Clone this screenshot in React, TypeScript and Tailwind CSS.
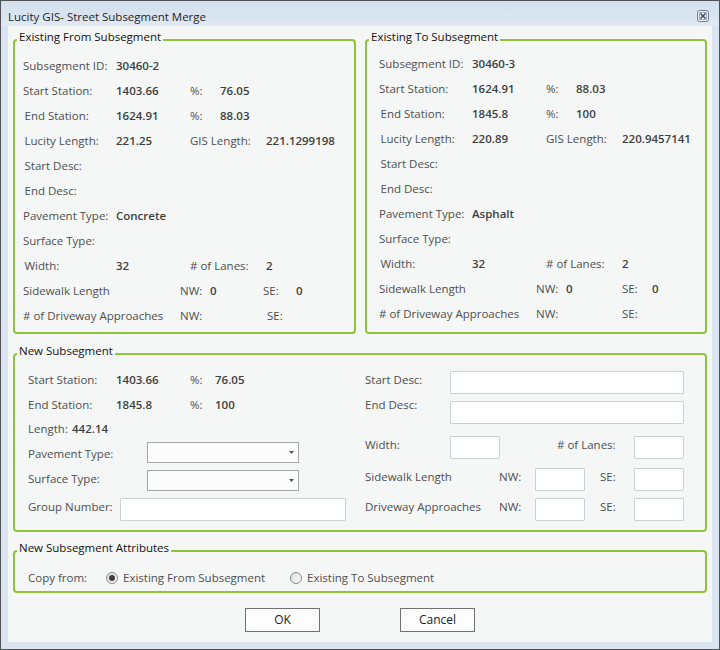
import React from "react";

const LBL = "text-[#4e4e4e]";
const VAL = "font-semibold text-[#3e3e3e]";

type C = { t: string; w?: string; v?: boolean; cls?: string };

function Row({ cells }: { cells: C[] }) {
  return (
    <div className="flex h-[25px] items-center whitespace-nowrap">
      {cells.map((c, i) => (
        <span key={i} className={`shrink-0 ${c.w ?? ""} ${c.v ? VAL : LBL} ${c.cls ?? ""}`}>
          {c.t}
        </span>
      ))}
    </div>
  );
}

const fromRows: C[][] = [
  [{ t: "Subsegment ID:", w: "w-[93px]" }, { t: "30460-2", v: true }],
  [{ t: "Start Station:", w: "w-[93px]" }, { t: "1403.66", v: true, w: "w-[74px]" }, { t: "%:", w: "w-[30px]" }, { t: "76.05", v: true }],
  [{ t: "End Station:", w: "w-[93px]", cls: "pl-[1.5px]" }, { t: "1624.91", v: true, w: "w-[74px]" }, { t: "%:", w: "w-[30px]" }, { t: "88.03", v: true }],
  [{ t: "Lucity Length:", w: "w-[93px]", cls: "pl-[1.5px]" }, { t: "221.25", v: true, w: "w-[74px]" }, { t: "GIS Length:", w: "w-[76px]" }, { t: "221.1299198", v: true }],
  [{ t: "Start Desc:", cls: "pl-[1.5px]" }],
  [{ t: "End Desc:", cls: "pl-[1.5px]" }],
  [{ t: "Pavement Type:", w: "w-[93px]" }, { t: "Concrete", v: true }],
  [{ t: "Surface Type:" }],
  [{ t: "Width:", w: "w-[93px]", cls: "pl-[1.5px]" }, { t: "32", v: true, w: "w-[74px]" }, { t: "# of Lanes:", w: "w-[76px]" }, { t: "2", v: true }],
  [{ t: "Sidewalk Length", w: "w-[157px]" }, { t: "NW:", w: "w-[30px]" }, { t: "0", v: true, w: "w-[53px]" }, { t: "SE:", w: "w-[33px]" }, { t: "0", v: true }],
  [{ t: "# of Driveway Approaches", w: "w-[157px]" }, { t: "NW:", w: "w-[87px]" }, { t: "SE:" }],
];

const toRows: C[][] = [
  [{ t: "Subsegment ID:", w: "w-[93px]" }, { t: "30460-3", v: true }],
  [{ t: "Start Station:", w: "w-[93px]" }, { t: "1624.91", v: true, w: "w-[74px]" }, { t: "%:", w: "w-[30px]" }, { t: "88.03", v: true }],
  [{ t: "End Station:", w: "w-[93px]", cls: "pl-[1.5px]" }, { t: "1845.8", v: true, w: "w-[74px]" }, { t: "%:", w: "w-[30px]" }, { t: "100", v: true }],
  [{ t: "Lucity Length:", w: "w-[93px]", cls: "pl-[1.5px]" }, { t: "220.89", v: true, w: "w-[74px]" }, { t: "GIS Length:", w: "w-[76px]" }, { t: "220.9457141", v: true }],
  [{ t: "Start Desc:", cls: "pl-[1.5px]" }],
  [{ t: "End Desc:", cls: "pl-[1.5px]" }],
  [{ t: "Pavement Type:", w: "w-[93px]" }, { t: "Asphalt", v: true }],
  [{ t: "Surface Type:" }],
  [{ t: "Width:", w: "w-[93px]", cls: "pl-[1.5px]" }, { t: "32", v: true, w: "w-[74px]" }, { t: "# of Lanes:", w: "w-[76px]" }, { t: "2", v: true }],
  [{ t: "Sidewalk Length", w: "w-[157px]" }, { t: "NW:", w: "w-[30px]" }, { t: "0", v: true, w: "w-[56px]" }, { t: "SE:", w: "w-[30px]" }, { t: "0", v: true }],
  [{ t: "# of Driveway Approaches", w: "w-[157px]" }, { t: "NW:", w: "w-[86px]" }, { t: "SE:" }],
];

const FS = "m-0 min-w-0 rounded-[4px] border-2 border-[#8fc43a] p-0";
const LEG = "ml-[2px] px-[2px] pb-[5px] leading-[16px] text-[#111]";

function TextInput({ w }: { w: string }) {
  return <div className={`h-[23px] shrink-0 rounded-[1px] border border-[#cdd1d4] bg-white ${w}`} />;
}

function Select() {
  return (
    <div className="flex h-[21px] w-[152px] shrink-0 items-center justify-end border border-[#a7a7a7] bg-[#fcfcfc] pr-[4px]">
      <svg width="5" height="3" viewBox="0 0 5 3">
        <polygon points="0,0 5,0 2.5,3" fill="#555" />
      </svg>
    </div>
  );
}

function Radio({ checked }: { checked?: boolean }) {
  return (
    <span className="flex h-[12px] w-[12px] shrink-0 items-center justify-center rounded-full border border-[#8a8a8a] bg-linear-to-br from-[#dcdcdc] to-[#fbfbfb]">
      {checked && <span className="h-[6px] w-[6px] rounded-full bg-[#3e3e3e]" />}
    </span>
  );
}

export default function App() {
  return (
    <div className="flex h-[650px] w-[720px] flex-col border border-[#4f5257] bg-[#dae4f0] font-['Open_Sans',sans-serif] text-[11.5px]">
      {/* Title bar */}
      <div className="flex h-[25px] shrink-0 items-start justify-between bg-linear-to-b from-[#d3dfed] to-[#dfe8f3] pl-[7px] pr-[10px]">
        <span className="pt-[8px] text-[11.5px] leading-[16px] text-[#1e1e1e]">Lucity GIS- Street Subsegment Merge</span>
        <svg className="mt-[9px]" width="12" height="12" viewBox="0 0 12 12">
          <rect x="0.5" y="0.5" width="11" height="11" rx="2" fill="#eef2f7" stroke="#6b7a8f" />
          <rect x="2.5" y="2.5" width="7" height="7" fill="#ffffff" stroke="#9aa6b5" />
          <path d="M3.5 3.5 L8.5 8.5 M8.5 3.5 L3.5 8.5" stroke="#3b4656" strokeWidth="1.6" />
        </svg>
      </div>

      {/* Content */}
      <div className="mx-[7px] mb-[7px] flex flex-1 flex-col bg-[#f5f7f7] px-[5px] pt-[3px]">
        <div className="flex gap-[9px]">
          <fieldset className={`${FS} w-[343px]`}>
            <legend className={LEG}>Existing From Subsegment</legend>
            <div className="pl-[8px] pt-[3px] pb-[4px]">
              {fromRows.map((r, i) => (
                <Row key={i} cells={r} />
              ))}
            </div>
          </fieldset>
          <fieldset className={`${FS} w-[342px]`}>
            <legend className={LEG}>Existing To Subsegment</legend>
            <div className="pl-[12px] pt-[1px] pb-[6px]">
              {toRows.map((r, i) => (
                <Row key={i} cells={r} />
              ))}
            </div>
          </fieldset>
        </div>

        {/* New Subsegment */}
        <fieldset className={`${FS} mt-[9px]`}>
          <legend className={LEG}>New Subsegment</legend>
          <div className="flex pt-[7px] pb-[9px]">
            {/* left column */}
            <div className="flex w-[350px] shrink-0 flex-col pl-[13px] whitespace-nowrap">
              <div className="mt-[1px] flex h-[16px] items-center leading-[16px]">
                <span className={`w-[88px] ${LBL}`}>Start Station:</span>
                <span className={`w-[74px] ${VAL}`}>1403.66</span>
                <span className={`w-[25px] ${LBL}`}>%:</span>
                <span className={VAL}>76.05</span>
              </div>
              <div className="mt-[9px] flex h-[16px] items-center leading-[16px]">
                <span className={`w-[88px] ${LBL}`}>End Station:</span>
                <span className={`w-[74px] ${VAL}`}>1845.8</span>
                <span className={`w-[25px] ${LBL}`}>%:</span>
                <span className={VAL}>100</span>
              </div>
              <div className="mt-[8px] flex h-[16px] items-center leading-[16px]">
                <span className={`w-[44px] ${LBL}`}>Length:</span>
                <span className={VAL}>442.14</span>
              </div>
              <div className="mt-[5px] flex items-start">
                <span className={`mt-[4px] w-[119px] leading-[16px] ${LBL}`}>Pavement Type:</span>
                <Select />
              </div>
              <div className="mt-[7px] flex items-start">
                <span className={`mt-[1px] w-[119px] leading-[16px] ${LBL}`}>Surface Type:</span>
                <Select />
              </div>
              <div className="mt-[7px] flex items-start">
                <span className={`mt-[1px] w-[92px] leading-[16px] ${LBL}`}>Group Number:</span>
                <TextInput w="w-[226px]" />
              </div>
            </div>
            {/* right column */}
            <div className="flex flex-col whitespace-nowrap">
              <div className="flex items-start">
                <span className={`mt-[1px] w-[85px] leading-[16px] ${LBL}`}>Start Desc:</span>
                <TextInput w="w-[234px]" />
              </div>
              <div className="mt-[7px] flex items-start">
                <span className={`-mt-[4px] w-[85px] leading-[16px] ${LBL}`}>End Desc:</span>
                <TextInput w="w-[234px]" />
              </div>
              <div className="mt-[12px] flex items-start">
                <span className={`mt-[1px] w-[85px] leading-[16px] ${LBL}`}>Width:</span>
                <TextInput w="w-[50px]" />
                <span className={`ml-[57px] mt-[1px] w-[77px] leading-[16px] ${LBL}`}># of Lanes:</span>
                <TextInput w="w-[50px]" />
              </div>
              <div className="mt-[9px] flex items-start">
                <span className={`mt-[1px] w-[134px] leading-[16px] ${LBL}`}>Sidewalk Length</span>
                <span className={`mt-[1px] w-[36px] leading-[16px] ${LBL}`}>NW:</span>
                <TextInput w="w-[50px]" />
                <span className={`ml-[15px] mt-[1px] w-[34px] leading-[16px] ${LBL}`}>SE:</span>
                <TextInput w="w-[50px]" />
              </div>
              <div className="mt-[7px] flex items-start">
                <span className={`mt-[1px] w-[134px] leading-[16px] ${LBL}`}>Driveway Approaches</span>
                <span className={`mt-[1px] w-[36px] leading-[16px] ${LBL}`}>NW:</span>
                <TextInput w="w-[50px]" />
                <span className={`ml-[15px] mt-[1px] w-[34px] leading-[16px] ${LBL}`}>SE:</span>
                <TextInput w="w-[50px]" />
              </div>
            </div>
          </div>
        </fieldset>

        {/* New Subsegment Attributes */}
        <fieldset className={`${FS} mt-[8px]`}>
          <legend className={LEG}>New Subsegment Attributes</legend>
          <div className="mt-[9px] mb-[5px] flex h-[16px] items-center whitespace-nowrap pl-[13px] leading-[16px]">
            <span className={`w-[78px] ${LBL}`}>Copy from:</span>
            <div className="flex w-[184px] items-center">
              <Radio checked />
              <span className={`ml-[5px] ${LBL}`}>Existing From Subsegment</span>
            </div>
            <div className="flex items-center">
              <Radio />
              <span className={`ml-[5px] ${LBL}`}>Existing To Subsegment</span>
            </div>
          </div>
        </fieldset>

        {/* Buttons */}
        <div className="mt-[15px] flex justify-center gap-[80px]">
          <button className="h-[24px] w-[75px] border border-[#707070] bg-[#fdfdfd] text-[12px] text-[#222]">OK</button>
          <button className="h-[24px] w-[75px] border border-[#707070] bg-[#fdfdfd] text-[12px] text-[#222]">Cancel</button>
        </div>
      </div>
    </div>
  );
}
